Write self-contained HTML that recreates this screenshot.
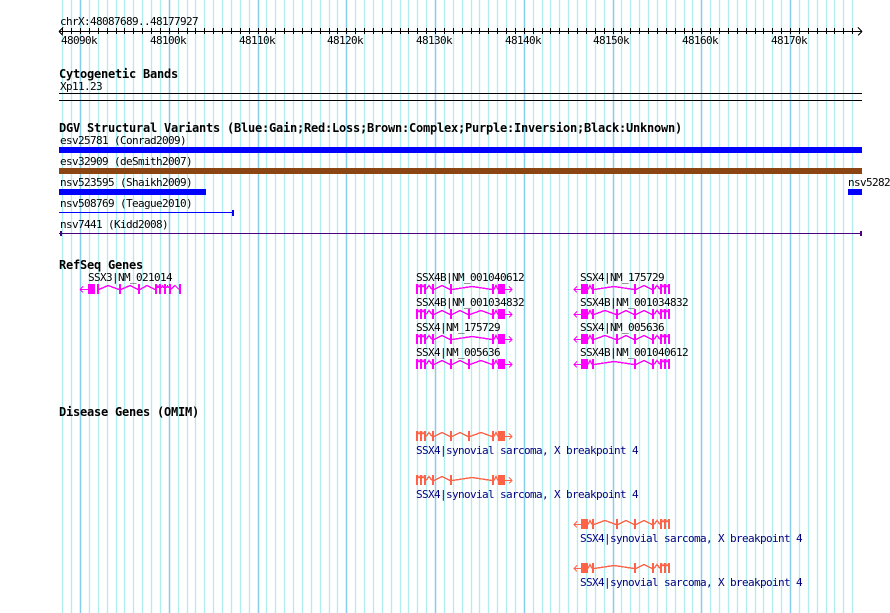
<!DOCTYPE html>
<html><head><meta charset="utf-8"><style>
html,body{margin:0;padding:0;background:#fff;width:890px;height:613px;overflow:hidden}
svg{display:block}
text{font-family:"DejaVu Sans Mono","Liberation Mono",monospace;font-size:11px;letter-spacing:-.622px;fill:#000;white-space:pre}
text.b{font-weight:bold;font-size:12px;letter-spacing:-.224px}
text.n{fill:#000080}
.c{shape-rendering:crispEdges}
</style></head><body>
<svg width="890" height="613" viewBox="0 0 890 613" xmlns="http://www.w3.org/2000/svg">
<defs>
<clipPath id="tc"><rect x="59" y="28" width="803" height="6"/></clipPath>
<path id="mn" d="M62.5 0V613M71.5 0V613M89.5 0V613M98.5 0V613M107.5 0V613M116.5 0V613M124.5 0V613M133.5 0V613M142.5 0V613M151.5 0V613M160.5 0V613M178.5 0V613M187.5 0V613M195.5 0V613M204.5 0V613M213.5 0V613M222.5 0V613M231.5 0V613M240.5 0V613M249.5 0V613M266.5 0V613M275.5 0V613M284.5 0V613M293.5 0V613M302.5 0V613M311.5 0V613M320.5 0V613M329.5 0V613M337.5 0V613M355.5 0V613M364.5 0V613M373.5 0V613M382.5 0V613M391.5 0V613M400.5 0V613M408.5 0V613M417.5 0V613M426.5 0V613M444.5 0V613M453.5 0V613M462.5 0V613M471.5 0V613M479.5 0V613M488.5 0V613M497.5 0V613M506.5 0V613M515.5 0V613M533.5 0V613M542.5 0V613M550.5 0V613M559.5 0V613M568.5 0V613M577.5 0V613M586.5 0V613M595.5 0V613M604.5 0V613M621.5 0V613M630.5 0V613M639.5 0V613M648.5 0V613M657.5 0V613M666.5 0V613M675.5 0V613M684.5 0V613M692.5 0V613M710.5 0V613M719.5 0V613M728.5 0V613M737.5 0V613M746.5 0V613M755.5 0V613M763.5 0V613M772.5 0V613M781.5 0V613M799.5 0V613M808.5 0V613M817.5 0V613M826.5 0V613M834.5 0V613M843.5 0V613M852.5 0V613"/>
<path id="mj" d="M80.5 0V613M169.5 0V613M258.5 0V613M346.5 0V613M435.5 0V613M524.5 0V613M613.5 0V613M701.5 0V613M790.5 0V613"/>
<g id="A">
<path fill="currentColor" d="M416-5h2v10h-2zM420-5h2v10h-2zM424-5h2v10h-2zM432-5h2v10h-2zM450-5h2v10h-2zM492-5h2v10h-2zM498-5h7v10h-7z"/>
<path fill="none" stroke="currentColor" stroke-width="1.4" d="M417 -1L419 -3.5L421 -1M421 -1L423 -3.5L425 -1M426 .5L429 -3.5L432 .5M434 .5L442 -3.5L450 .5M452 .5L472 -2.5L492 .5M494 .5L496 -3.5L498 .5M505 .5H512M509 -2.5L512 .5L509 3.5"/>
</g>
<g id="B">
<path fill="currentColor" d="M416-5h2v10h-2zM420-5h2v10h-2zM424-5h2v10h-2zM432-5h2v10h-2zM450-5h2v10h-2zM468-5h2v10h-2zM492-5h2v10h-2zM498-5h7v10h-7z"/>
<path fill="none" stroke="currentColor" stroke-width="1.4" d="M417 -1L419 -3.5L421 -1M421 -1L423 -3.5L425 -1M426 .5L429 -3.5L432 .5M434 .5L442 -3.5L450 .5M452 .5L460 -3.5L468 .5M470 .5L481 -3.5L492 .5M494 .5L496 -3.5L498 .5M505 .5H512M509 -2.5L512 .5L509 3.5"/>
</g>
</defs>

<g fill="none">
<use href="#mn" stroke="#afeeee" stroke-width="1.3"/>
<use href="#mj" stroke="#87ceeb" stroke-width="1.5"/>
</g>

<!-- ruler -->
<g class="c" fill="none" stroke="#000">
<path d="M59 31.5H862M59 31.5L63 27.5M59 31.5L63 35.5M862 31.5L858 27.5M862 31.5L858 35.5"/>
<g clip-path="url(#tc)"><use href="#mn"/><use href="#mj"/></g>
</g>
<text x="60" y="25">chrX:48087689..48177927</text>
<text x="61" y="44">48090k</text>
<text x="150" y="44">48100k</text>
<text x="239" y="44">48110k</text>
<text x="327" y="44">48120k</text>
<text x="416" y="44">48130k</text>
<text x="505" y="44">48140k</text>
<text x="593" y="44">48150k</text>
<text x="682" y="44">48160k</text>
<text x="771" y="44">48170k</text>

<!-- cytobands -->
<text class="b" x="59" y="78">Cytogenetic Bands</text>
<text x="60" y="90">Xp11.23</text>
<g class="c" fill="#000">
<rect x="59" y="93" width="803" height="1"/>
<rect x="59" y="100" width="803" height="1"/>
</g>

<!-- DGV -->
<text class="b" x="59" y="132">DGV Structural Variants (Blue:Gain;Red:Loss;Brown:Complex;Purple:Inversion;Black:Unknown)</text>
<text x="60" y="144">esv25781 (Conrad2009)</text>
<text x="60" y="165">esv32909 (deSmith2007)</text>
<text x="60" y="186">nsv523595 (Shaikh2009)</text>
<text x="60" y="207">nsv508769 (Teague2010)</text>
<text x="60" y="228">nsv7441 (Kidd2008)</text>
<text x="848" y="186">nsv5282</text>
<g class="c">
<rect x="59" y="147" width="803" height="6" fill="#0000ff"/>
<rect x="59" y="168" width="803" height="6" fill="#8b4513"/>
<rect x="59" y="189" width="147" height="6" fill="#0000ff"/>
<rect x="848" y="189" width="14" height="6" fill="#0000ff"/>
<rect x="59" y="212" width="174" height="1" fill="#0000ff"/>
<rect x="232" y="210" width="2" height="6" fill="#0000ff"/>
<rect x="59" y="233" width="803" height="1" fill="#4b0082"/>
<rect x="60" y="231" width="2" height="5" fill="#4b0082"/>
<rect x="860" y="231" width="2" height="5" fill="#4b0082"/>
</g>

<!-- RefSeq -->
<text class="b" x="59" y="269">RefSeq Genes</text>
<text x="88" y="281">SSX3|NM_021014</text>
<g class="c" transform="translate(0,289)">
<path fill="#ff00ff" d="M88-5h7v10h-7zM97-5h2v10h-2zM119-5h2v10h-2zM138-5h2v10h-2zM155-5h2v10h-2zM159-5h2v10h-2zM164-5h2v10h-2zM169-5h2v10h-2zM179-5h2v10h-2z"/>
<path fill="none" stroke="#ff00ff" stroke-width="1.4" d="M80 .5H88M80 .5L83 -2.5M80 .5L83 3.5M99 .5L108 -3.5L119 .5M121 .5L130 -3.5L138 .5M140 .5L147 -3.5L155 .5M157 -1L158 -3L159 -1M161 -1L162.5 -3L164 -1M166 -1L167.5 -3L169 -1M171 .5L175 -3.5L179 .5"/>
</g>
<text x="416" y="281">SSX4B|NM_001040612</text>
<text x="416" y="306">SSX4B|NM_001034832</text>
<text x="416" y="331">SSX4|NM_175729</text>
<text x="416" y="356">SSX4|NM_005636</text>
<text x="580" y="281">SSX4|NM_175729</text>
<text x="580" y="306">SSX4B|NM_001034832</text>
<text x="580" y="331">SSX4|NM_005636</text>
<text x="580" y="356">SSX4B|NM_001040612</text>
<g class="c" color="#ff00ff">
<use href="#A" transform="translate(0,289)"/>
<use href="#B" transform="translate(0,314)"/>
<use href="#A" transform="translate(0,339)"/>
<use href="#B" transform="translate(0,364)"/>
<use href="#A" transform="translate(1086,289) scale(-1,1)"/>
<use href="#B" transform="translate(1086,314) scale(-1,1)"/>
<use href="#B" transform="translate(1086,339) scale(-1,1)"/>
<use href="#A" transform="translate(1086,364) scale(-1,1)"/>
</g>

<!-- Disease -->
<text class="b" x="59" y="416">Disease Genes (OMIM)</text>
<g class="c" color="#ff6347">
<use href="#B" transform="translate(0,436)"/>
<use href="#A" transform="translate(0,480)"/>
<use href="#B" transform="translate(1086,524) scale(-1,1)"/>
<use href="#A" transform="translate(1086,568) scale(-1,1)"/>
</g>
<text class="n" x="416" y="454">SSX4|synovial sarcoma, X breakpoint 4</text>
<text class="n" x="416" y="498">SSX4|synovial sarcoma, X breakpoint 4</text>
<text class="n" x="580" y="542">SSX4|synovial sarcoma, X breakpoint 4</text>
<text class="n" x="580" y="586">SSX4|synovial sarcoma, X breakpoint 4</text>
</svg>
</body></html>
